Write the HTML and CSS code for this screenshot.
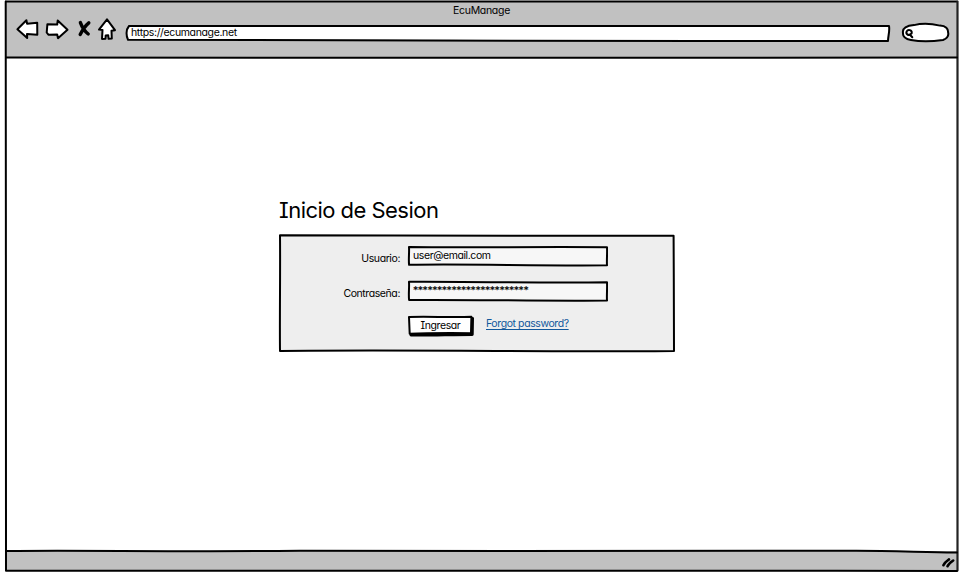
FILE: index.html
```
<!DOCTYPE html>
<html lang="es">
<head>
<meta charset="utf-8">
<title>EcuManage</title>
<link rel="stylesheet" href="styles.css">
</head>
<body>
<div class="browser">
  <header class="toolbar">
    <div class="title"><span>EcuManage</span></div>
    <div class="controls">
      <svg class="nav-icons" width="104" height="26" viewBox="15 16 104 26">
        <path d="M17.4 29.3 L26.4 20.3 L27.1 23.7 L37.2 22.7 L37.3 34.7 L27 34 L27.2 38.1 Z"/>
        <path d="M47.4 24.2 L57.2 24.5 L57.7 20.6 L67.5 29.7 L58 38.2 L57.2 34.5 L48.4 34.7 L46.7 32.5 Z"/>
        <path class="stop" d="M80.4 22.6 C82 27 85.4 31.8 88.2 34 M88.8 22.8 C84.8 26 82.3 30.4 80.2 34.5"/>
        <path d="M107 19.4 L99 29.6 L102.5 30 L102 38.9 L105.5 38.7 L105.7 35.4 L108.2 35.2 L108.6 38.8 L111.8 38.5 L111.5 30.8 L115 30.2 Z"/>
      </svg>
      <div class="address">
        <svg class="sketch" viewBox="0 0 766 19" preserveAspectRatio="none"><path d="M4 2 C250 1 500 3 764 2 C765 7 763 12 763 17 C520 18 320 15 3 15.7 C1.2 12 .6 6 4 2 Z"/></svg>
        <span class="url">https://ecumanage.net</span>
      </div>
      <svg class="search" width="50" height="22" viewBox="900 22 50 22">
        <path d="M903 33 C902 28 907 25.6 914 25.1 C921 23.3 931 23.4 940 25.6 C946 26 948.2 29 948 32 C949.2 36 947 38.4 943 40 C933 41.4 919 41.5 911 40 C906 39 902.6 36.5 903 33 Z"/>
        <path class="lens" d="M911.5 33.5 C908.5 36.4 905.5 34 906.7 31.4 C908 28.8 912.2 30 911.7 33 M910.2 35 L912.3 37.2"/>
      </svg>
    </div>
  </header>
  <main class="page">
    <section class="login">
      <h1><span>Inicio de Sesion</span></h1>
      <form class="panel">
        <svg class="sketch" viewBox="0 0 397 119" preserveAspectRatio="none"><path d="M2 1.2 C100 .8 260 2.2 395.6 1.7 C396 40 395.6 80 396 117 C290 118 120 115.6 2 117 C1.6 80 2.4 40 2 1.2 Z"/></svg>
        <label class="user-label"><span>Usuario:</span></label>
        <div class="field">
          <svg class="sketch" viewBox="0 0 201 22" preserveAspectRatio="none"><path d="M2 2 C60 2.8 130 1.6 200 2.2 C200.4 8 199.6 15 200 20.3 C130 21 60 18.7 2.1 19.8 C1.4 14 2.4 8 2 2 Z"/></svg>
          <span class="value email">user@email.com</span>
        </div>
        <label class="pass-label"><span>Contraseña:</span></label>
        <div class="field">
          <svg class="sketch" viewBox="0 0 201 22" preserveAspectRatio="none"><path d="M2 1.8 C60 1.4 130 3.2 200 2.3 C200.4 8 199.6 15 200 20.5 C130 21.2 60 19.4 2.1 20 C1.4 14 2.4 8 2 1.8 Z"/></svg>
          <span class="value stars">************************</span>
        </div>
        <div class="actions">
          <div class="button">
            <svg class="sketch" viewBox="0 0 67 22" preserveAspectRatio="none"><path class="shadow" d="M4 20 C20 20.4 45 19.4 65.2 19.4 L65.5 3.4"/><path d="M2 2 C20 1.5 45 2.4 64.4 1.8 L64 18.2 C40 18 20 18 2.7 18.8 Z"/></svg>
            <span>Ingresar</span>
          </div>
          <span class="forgot">Forgot password?</span>
        </div>
      </form>
    </section>
  </main>
  <footer class="status">
    <svg class="grip" width="16" height="14" viewBox="941 555 16 14"><path d="M943.4 565.2 C944.5 562.5 946.8 561 949 559.4 M947.5 566.2 C948.5 563.6 951 562 953.2 560.5"/></svg>
  </footer>
  <svg class="frame" viewBox="0 0 962 577">
    <path d="M6 1.5 H957"/>
    <path class="side" d="M957.5 1.5 V570.6"/>
    <path d="M5.7 1.5 C6.6 190 4.8 390 6 570.7 C220 571.6 300 570 480 570.8 C650 571.5 800 570 957 571"/>
    <path d="M6 57.5 C240 57 420 58.6 600 57.8 C730 57 850 58 957 57.5"/>
    <path d="M6 551 C80 550 170 552 300 550.8 C480 551.8 690 550 850 550.8 C890 550.5 930 552.6 957 552.4"/>
  </svg>
</div>
</body>
</html>
```
FILE: styles.css
```
* { box-sizing: border-box; }
body {
  margin: 0;
  background: #fff;
  color: #000;
  font-family: Inter, "Liberation Sans", sans-serif;
  font-feature-settings: "cv11", "cv08";
  font-size: 10.5px;
  line-height: 16px;
  letter-spacing: -0.41px;
  white-space: nowrap;
}
svg { fill: #fff; stroke: #000; stroke-width: 2; stroke-linejoin: round; stroke-linecap: round; }
.browser {
  position: relative;
  width: 962px;
  height: 577px;
  padding: 1px 4px 6px 5px;
  display: flex;
  flex-direction: column;
}
.frame { position: absolute; inset: 0; width: 962px; height: 577px; fill: none; pointer-events: none; }
.frame .side { stroke: #222; stroke-width: 2.2; }
.toolbar { height: 57px; background: #c1c1c1; }
.title { padding-top: 2px; height: 21px; text-align: center; }
.title span { letter-spacing: -0.3px; }
.controls { display: flex; align-items: flex-start; padding-left: 10px; }
.nav-icons { margin-top: -6px; }
.nav-icons .stop { fill: none; stroke-width: 3.4; }
.address { position: relative; width: 766px; height: 19px; margin: 2px 9px 0 6px; padding: 1px 0 0 6px; }
.address .url { position: relative; letter-spacing: -0.36px; }
.sketch { position: absolute; inset: 0; width: 100%; height: 100%; }
.search .lens { fill: none; }
.page { flex: 1; padding: 138px 0 0 273px; }
.login { width: 397px; }
h1 { margin: 0; height: 38px; font-size: 22px; line-height: 28px; font-weight: 400; letter-spacing: -0.53px; padding-left: 1px; }
.panel {
  position: relative;
  height: 119px;
  display: grid;
  grid-template-columns: 122px 201px;
  grid-template-rows: 22px 22px 22px;
  column-gap: 7px;
  row-gap: 13px;
  padding-top: 11px;
}
.panel > .sketch { fill: #eee; }
label { position: relative; text-align: right; padding-top: 6px; }
.field { position: relative; padding: 3px 0 0 6px; }
.field .sketch { fill: #f7f7f7; }
.value { position: relative; }
.stars { letter-spacing: -0.46px; -webkit-text-stroke: 0.15px #000; }
.actions { grid-column: 2; display: flex; gap: 12px; }
.button { position: relative; width: 67px; height: 22px; padding-top: 3px; text-align: center; }
.button span { position: relative; }
.button .shadow { stroke-width: 3; fill: none; }
.forgot { position: relative; height: 16px; margin-top: 1px; color: #12589c; text-decoration: underline; text-underline-offset: 2px; }
.status { height: 20px; background: #c1c1c1; display: flex; justify-content: flex-end; padding: 4px 1px 0 0; }
.grip { fill: none; stroke-width: 2.6; }
```
